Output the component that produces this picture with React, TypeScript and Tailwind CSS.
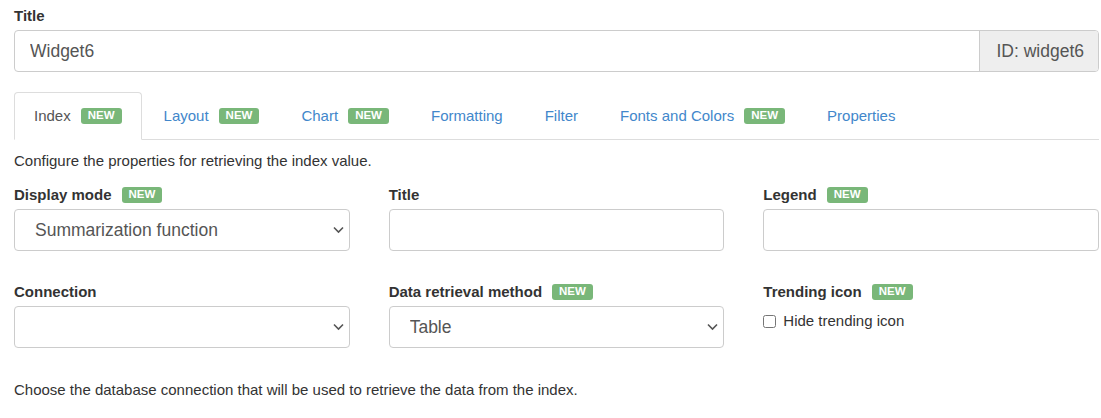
import React from "react";

const tabs = [
  { name: "Index", isNew: true },
  { name: "Layout", isNew: true },
  { name: "Chart", isNew: true },
  { name: "Formatting", isNew: false },
  { name: "Filter", isNew: false },
  { name: "Fonts and Colors", isNew: true },
  { name: "Properties", isNew: false },
];

function NewBadge() {
  return (
    <span className="inline-flex items-center h-[16px] px-[7px] rounded-[3px] bg-[#79b779] text-white text-[11.5px] font-bold leading-none">
      NEW
    </span>
  );
}

function FieldLabel({ text, isNew }: { text: string; isNew?: boolean }) {
  return (
    <div className="flex items-center gap-[10px] h-[21px] mb-[4px] text-[15px] font-bold leading-[21px] text-[#333]">
      <span>{text}</span>
      {isNew && <NewBadge />}
    </div>
  );
}

function Chevron() {
  return (
    <svg
      className="absolute right-[6px] top-1/2 -translate-y-1/2 pointer-events-none"
      width="11"
      height="7"
      viewBox="0 0 11 7"
      fill="none"
    >
      <path d="M1 1l4.5 4.5L10 1" stroke="#555" strokeWidth="1.6" />
    </svg>
  );
}

function SelectBox({ value }: { value: string }) {
  return (
    <div className="relative h-[42px]">
      <select
        defaultValue={value}
        className="appearance-none w-full h-full border border-[#ccc] rounded-[4px] bg-white pl-[20px] pr-[30px] text-[17.5px] text-[#555] outline-none"
      >
        <option value={value}>{value}</option>
      </select>
      <Chevron />
    </div>
  );
}

function TextBox() {
  return (
    <input
      type="text"
      className="w-full h-[42px] border border-[#ccc] rounded-[4px] bg-white px-[15px] text-[17.5px] text-[#555] outline-none"
    />
  );
}

export default function App() {
  return (
    <div
      className="w-[1085px] ml-[14px] pt-[5px] text-[#333] bg-white"
      style={{ fontFamily: '"Liberation Sans", Arial, sans-serif' }}
    >
      {/* Title */}
      <FieldLabel text="Title" />
      <div className="flex h-[42px] border border-[#ccc] rounded-[4px] overflow-hidden">
        <input
          type="text"
          defaultValue="Widget6"
          className="flex-1 px-[15px] text-[17.5px] text-[#555] outline-none"
        />
        <div className="flex items-center pl-[16px] pr-[14px] bg-[#eee] border-l border-[#ccc] text-[17.5px] text-[#555]">
          ID: widget6
        </div>
      </div>

      {/* Tabs */}
      <ul className="flex mt-[20px] border-b border-[#ddd]">
        {tabs.map((t, i) => (
          <li key={t.name} className="mr-[2px] -mb-px">
            <div
              className={`flex items-center gap-[10px] h-[48px] px-[19px] text-[15px] border rounded-t-[4px] ${
                i === 0
                  ? "border-[#ddd] border-b-white bg-white text-[#555]"
                  : "border-transparent text-[#4287cb]"
              }`}
            >
              <span>{t.name}</span>
              {t.isNew && <NewBadge />}
            </div>
          </li>
        ))}
      </ul>

      <p className="mt-[10px] text-[15px] leading-[21px]">
        Configure the properties for retrieving the index value.
      </p>

      <div className="grid grid-cols-3 gap-x-[39px] mt-[13px]">
        <div>
          <FieldLabel text="Display mode" isNew />
          <SelectBox value="Summarization function" />
        </div>
        <div>
          <FieldLabel text="Title" />
          <TextBox />
        </div>
        <div>
          <FieldLabel text="Legend" isNew />
          <TextBox />
        </div>

        <div className="mt-[30px]">
          <FieldLabel text="Connection" />
          <SelectBox value="" />
        </div>
        <div className="mt-[30px]">
          <FieldLabel text="Data retrieval method" isNew />
          <SelectBox value="Table" />
        </div>
        <div className="mt-[30px]">
          <FieldLabel text="Trending icon" isNew />
          <label className="flex items-center gap-[7px] h-[21px] mt-[9px] text-[15px] text-[#333]">
            <input type="checkbox" className="w-[13px] h-[13px] m-0" />
            <span>Hide trending icon</span>
          </label>
        </div>
      </div>

      <p className="mt-[31px] text-[15px] leading-[21px]">
        Choose the database connection that will be used to retrieve the data from the index.
      </p>
    </div>
  );
}
